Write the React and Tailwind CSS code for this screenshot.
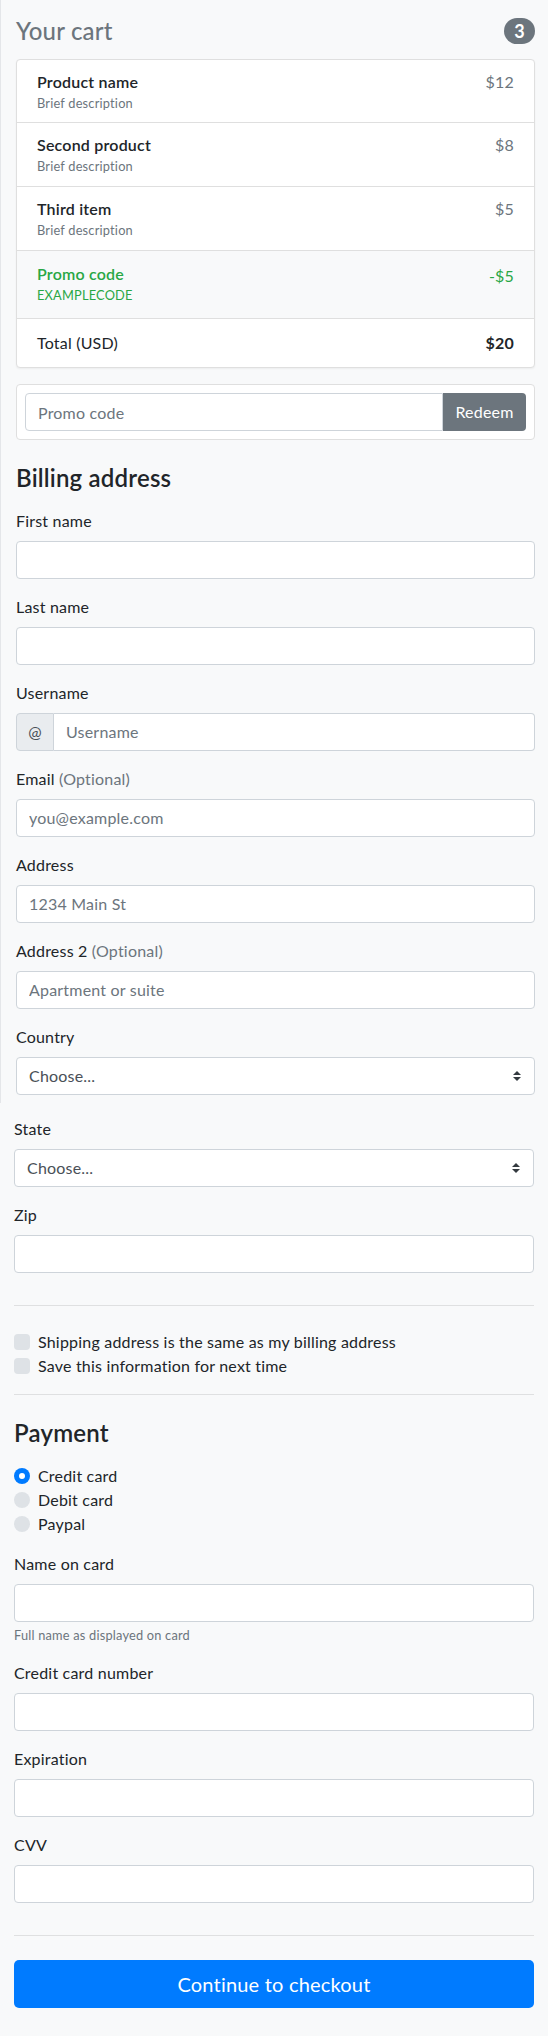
import React from 'react'

const items = [
    { name: 'Product name', desc: 'Brief description', price: '$12' },
    { name: 'Second product', desc: 'Brief description', price: '$8' },
    { name: 'Third item', desc: 'Brief description', price: '$5' },
]

const SelectArrow = () => (
    <svg width="8" height="10" viewBox="0 0 4 5" className="shrink-0">
        <path fill="#343a40" d="M2 0L0 2h4zm0 5L0 3h4z" />
    </svg>
)

const Field = ({ label, optional, placeholder, prefix, select, help, last }) => {
    return (
        <div className={last ? '' : 'mb-4'}>
            <label className="block leading-6 mb-2 font-normal">
                {label}
                {optional && <span className="text-[#6c757d]"> (Optional)</span>}
            </label>
            {select ? (
                <div className="h-[38px] w-full rounded border border-[#ced4da] bg-white pl-3 pr-[13px] flex items-center justify-between text-[#495057]">
                    <span>Choose...</span>
                    <SelectArrow />
                </div>
            ) : prefix ? (
                <div className="flex h-[38px]">
                    <span className="w-[38px] flex items-center justify-center bg-[#e9ecef] border border-[#ced4da] rounded-l text-[#495057]">
                        {prefix}
                    </span>
                    <input
                        placeholder={placeholder}
                        className="flex-1 min-w-0 border border-l-0 border-[#ced4da] rounded-r bg-white px-3 outline-none tracking-[0.2px] placeholder:text-[#6c757d]"
                    />
                </div>
            ) : (
                <input
                    placeholder={placeholder}
                    className="block h-[38px] w-full rounded border border-[#ced4da] bg-white px-3 outline-none tracking-[0.2px] placeholder:text-[#6c757d]"
                />
            )}
            {help && <small className="block mt-1 text-[12.8px] leading-[1.5] text-[#6c757d]">{help}</small>}
        </div>
    )
}

const Check = ({ label }) => (
    <div className="flex items-center h-6 gap-[8px]">
        <span className="w-4 h-4 rounded bg-[#dee2e6] shrink-0"></span>
        <span>{label}</span>
    </div>
)

const Radio = ({ label, checked }) => (
    <div className="flex items-center h-6 gap-[8px]">
        {checked ? (
            <span className="w-4 h-4 rounded-full bg-[#007bff] flex items-center justify-center shrink-0">
                <span className="w-[6px] h-[6px] rounded-full bg-white"></span>
            </span>
        ) : (
            <span className="w-4 h-4 rounded-full bg-[#dee2e6] shrink-0"></span>
        )}
        <span>{label}</span>
    </div>
)

export default function App() {
    return (
        <div className="min-h-screen bg-[#f8f9fa] text-[#212529] text-base font-normal tracking-[0.2px] font-['Lato','Liberation_Sans',sans-serif]">
            <div className="border-l border-[#e4e6e9] pl-[15px] pr-[13px] pt-[14px] pb-2">
                <h4 className="flex justify-between items-center h-[29px] mb-4 text-[24px] leading-[1.2] font-medium text-[#6c757d]">
                    <span className="mt-[5px]">Your cart</span>
                    <span className="h-[26px] w-[31px] mt-[4px] rounded-full bg-[#6c757d] text-white text-[18px] font-bold flex items-center justify-center leading-none">
                        3
                    </span>
                </h4>

                <ul className="bg-white border border-[#dfdfdf] rounded divide-y divide-[#dfdfdf] shadow-[0_1px_2px_rgba(0,0,0,0.05)] mb-4">
                    {items.map((item, i) => (
                        <li key={item.name} className={`${i === 0 ? 'h-[63px]' : 'h-[64px]'} px-5 pt-3 flex justify-between items-start`}>
                            <div>
                                <h6 className="text-base leading-[1.2] font-semibold">{item.name}</h6>
                                <small className="block mt-[3px] text-[12.8px] leading-[1.5] text-[#6c757d]">{item.desc}</small>
                            </div>
                            <span className="text-[#6c757d] leading-5">{item.price}</span>
                        </li>
                    ))}
                    <li className="h-[68px] px-5 pt-[13px] flex justify-between items-start bg-[#f8f9fa] text-[#28a745]">
                        <div>
                            <h6 className="text-base leading-[1.2] font-semibold">Promo code</h6>
                            <small className="block mt-[3px] text-[12.8px] leading-[1.5]">EXAMPLECODE</small>
                        </div>
                        <span className="leading-6">-$5</span>
                    </li>
                    <li className="h-[48px] px-5 flex justify-between items-center">
                        <span>Total (USD)</span>
                        <strong className="font-bold">$20</strong>
                    </li>
                </ul>

                <form className="bg-white border border-[#dfdfdf] rounded p-2 flex mb-6">
                    <input
                        placeholder="Promo code"
                        className="flex-1 min-w-0 h-[38px] border border-[#ced4da] rounded-l px-3 outline-none tracking-[0.2px] placeholder:text-[#6c757d]"
                    />
                    <button type="button" className="h-[38px] w-[83px] bg-[#6c757d] text-white rounded-r">
                        Redeem
                    </button>
                </form>

                <h4 className="text-[24px] leading-[1.2] font-semibold mb-4">Billing address</h4>
                <Field label="First name" />
                <Field label="Last name" />
                <Field label="Username" prefix="@" placeholder="Username" />
                <Field label="Email" optional placeholder="you@example.com" />
                <Field label="Address" placeholder="1234 Main St" />
                <Field label="Address 2" optional placeholder="Apartment or suite" />
                <Field label="Country" select last />
            </div>

            <div className="flex flex-col pl-[14px] pr-[14px] pt-[14px] pb-[29px]">
                <Field label="State" select />
                <Field label="Zip" />

                <hr className="mt-4 mb-6 border-0 border-t border-[#dfe0e1]" />
                <Check label="Shipping address is the same as my billing address" />
                <Check label="Save this information for next time" />
                <hr className="mt-4 mb-6 border-0 border-t border-[#dfe0e1]" />

                <h4 className="text-[24px] leading-[1.2] font-semibold mb-4">Payment</h4>
                <div className="mb-4">
                    <Radio label="Credit card" checked />
                    <Radio label="Debit card" />
                    <Radio label="Paypal" />
                </div>

                <Field label="Name on card" help="Full name as displayed on card" />
                <Field label="Credit card number" />
                <Field label="Expiration" />
                <Field label="CVV" />

                <hr className="mt-4 mb-6 border-0 border-t border-[#dfe0e1]" />
                <button type="button" className="w-full h-[48px] rounded-[5px] bg-[#007bff] text-white text-[20px]">
                    Continue to checkout
                </button>
            </div>
        </div>
    )
}
